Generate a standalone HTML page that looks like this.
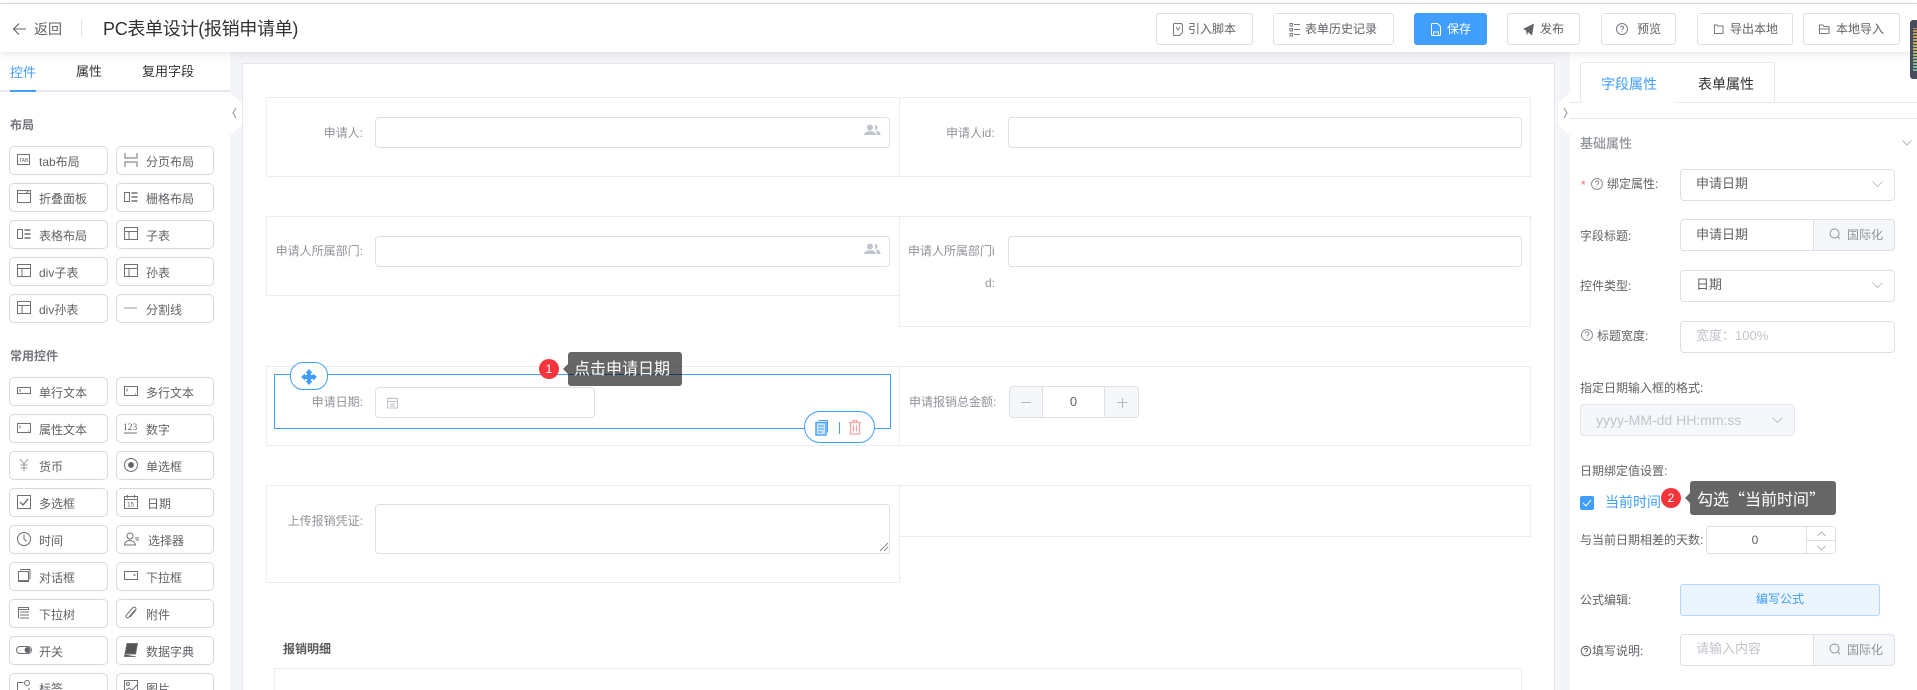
<!DOCTYPE html>
<html lang="zh-CN"><head><meta charset="utf-8"><title>PC表单设计</title>
<style>
*{box-sizing:border-box;margin:0;padding:0}
html,body{width:1917px;height:690px;overflow:hidden;background:#fff}
body{position:relative;font-family:"Liberation Sans","Noto Sans CJK SC",sans-serif;font-size:12px;color:#606266}
.a,.a>*{position:absolute}
.t{position:absolute;white-space:nowrap;line-height:20px}
.hb{position:absolute;top:13px;height:32px;border:1px solid #dcdfe6;border-radius:3px;background:#fff;line-height:30px;font-size:12px;color:#606266;white-space:nowrap}
.hb svg{position:absolute;top:0}
.hb span{position:absolute;top:0}
.b{position:absolute;width:99px;height:29px;border:1px solid #d6d8dc;border-radius:5px;background:#fff;line-height:30px;color:#606266;font-size:12px;white-space:nowrap}
.b svg{position:absolute;left:6px;top:5px;width:16px;height:16px;fill:none;stroke:#6e7076;stroke-width:1}
.b span{position:absolute;left:29px;top:0}
.c2{left:116px;width:98px}.c1{left:9px}
.cell{position:absolute;border:1px solid #ebedf0;background:#fff}
.in{position:absolute;border:1px solid #dcdfe6;border-radius:4px;background:#fff}
.lb{position:absolute;right:1554px;color:#909399;line-height:20px;white-space:nowrap;font-size:12px}
.rl{position:absolute;left:1580px;line-height:20px;white-space:nowrap;font-size:12px;color:#606266}
.val{position:absolute;left:1696px;line-height:20px;font-size:13px;color:#606266;white-space:nowrap}
.add{position:absolute;left:1813px;width:82px;height:32px;background:#f5f7fa;border:1px solid #dcdfe6;border-radius:0 4px 4px 0;color:#909399}
.add span{position:absolute;left:33px;top:0;line-height:30px;font-size:12px;white-space:nowrap}
.add svg{position:absolute;left:15px;top:8px}
.tip{position:absolute;background:rgba(0,0,0,.6);color:#fff;font-size:16px;border-radius:3px;white-space:nowrap;z-index:5}
.tip:before{content:"";position:absolute;left:-5px;top:12px;border:5px solid transparent;border-left:0;border-right-color:rgba(0,0,0,.6)}
.bd{position:absolute;width:20px;height:20px;border-radius:50%;background:#f5333a;color:#fff;text-align:center;line-height:20px;font-size:12px;z-index:6}
.ln{position:absolute;background:#e4e7ed}
.q{font-family:"Noto Sans CJK SC",sans-serif}
</style></head><body>

<!-- top header -->
<div class="ln" style="left:0;top:3px;width:1917px;height:1px;background:#dedede"></div>
<div style="position:absolute;left:0;top:4px;width:1917px;height:48px;background:#fff;box-shadow:0 2px 8px rgba(0,0,0,.10);z-index:2"></div>
<div style="position:absolute;left:0;top:0;width:1917px;height:52px;z-index:3">
<svg style="position:absolute;left:12px;top:22px" width="15" height="14" fill="none" stroke="#606266" stroke-width="1.1"><path d="M14 7H1.5M7 1.5 1.5 7 7 12.5"/></svg>
<div class="t" style="left:34px;top:19px;font-size:14px;color:#606266">返回</div>
<div class="ln" style="left:81px;top:20px;width:1px;height:16px;background:#dcdfe6"></div>
<div class="t" style="left:103px;top:17px;font-size:18px;line-height:24px;color:#303133;letter-spacing:-.3px">PC表单设计(报销申请单)</div>

<div class="hb" style="left:1156px;width:97px"><svg style="left:6px" width="30" height="30" fill="none" stroke="#777a80"><path d="M18.500 9.500h-7a1 1 0 0 0-1 1v10a1 1 0 0 0 1 1h5l3-3v-7.500a1 1 0 0 0-1-1zM13 13l2 3 2-3"/></svg><span style="left:31px">引入脚本</span></div>
<div class="hb" style="left:1273px;width:121px"><svg style="left:4px" width="30" height="30" fill="none" stroke="#777a80"><path d="M16 10.500h6M16 15.500h6M16 20.500h6M12 9.500h2.500v2.500H12zM12 14.500h2.500v2.500H12zM12 19.500h2.500v2.500H12z"/></svg><span style="left:31px">表单历史记录</span></div>
<div class="hb" style="left:1414px;width:73px;background:#409eff;border-color:#409eff;color:#fff"><svg style="left:6px" width="30" height="30" fill="none" stroke="#fff"><path d="M16.500 9.500h-5a1 1 0 0 0-1 1v10a1 1 0 0 0 1 1h7a1 1 0 0 0 1-1v-8zM12.500 21.500v-3.500h5v3.500"/></svg><span style="left:32px">保存</span></div>
<div class="hb" style="left:1507px;width:73px"><svg style="left:5px" width="30" height="30"><path d="M10 15 21 9.500l-2 12-4-3.500-1 3.500-1-5z" fill="#606266"/></svg><span style="left:32px">发布</span></div>
<div class="hb" style="left:1601px;width:75px"><svg style="left:-1px" width="34" height="30" fill="none" stroke="#777a80"><circle cx="21" cy="15" r="5.500"/><path d="M19.500 13.500a1.500 1.500 0 1 1 2 1.500q-.5.300-.5 1.200M21 17.300v.7"/></svg><span style="left:35px">预览</span></div>
<div class="hb" style="left:1697px;width:96px"><svg style="left:4px" width="30" height="30" fill="none" stroke="#777a80"><path d="M12.500 11h2.500l1 1h5v7.500h-8.500z"/></svg><span style="left:32px">导出本地</span></div>
<div class="hb" style="left:1803px;width:97px"><svg style="left:4px" width="30" height="30" fill="none" stroke="#777a80"><path d="M11.500 11h3.500l1 1.500h5v7h-9.500zM11.500 15h10"/></svg><span style="left:32px">本地导入</span></div>
</div>
<div style="position:absolute;left:1910px;top:20px;width:7px;height:59px;background:#474d5c;border-radius:3px 0 0 3px;z-index:4;overflow:hidden"><div style="position:absolute;left:3px;top:8px;width:4px;height:44px;opacity:.8;background:linear-gradient(#d9a05b,#d8cf78 50%,#6fd6b5)"></div><div style="position:absolute;left:3px;top:3px;width:4px;height:52px;background:repeating-linear-gradient(#474d5c 0 1px,transparent 1px 3px)"></div></div>

<!-- gutter -->
<div style="position:absolute;left:230px;top:52px;width:1340px;height:638px;background:#f4f5f9"></div>
<svg style="position:absolute;left:230px;top:91px" width="12" height="46"><path d="M0 2 12 12V34L0 44z" fill="#fff"/><path d="M6 17 3 22l3 5" fill="none" stroke="#909399"/></svg>
<svg style="position:absolute;left:1558px;top:91px" width="12" height="46"><path d="M12 2 0 12V34L12 44z" fill="#fff"/><path d="M6 17l3 5-3 5" fill="none" stroke="#909399"/></svg>

<!-- left panel -->
<div class="t" style="left:10px;top:63px;font-size:13px;color:#409eff">控件</div>
<div class="t" style="left:76px;top:62px;font-size:13px;color:#303133">属性</div>
<div class="t" style="left:142px;top:62px;font-size:13px;color:#303133">复用字段</div>
<div class="ln" style="left:0;top:90px;width:230px;height:2px"></div>
<div class="ln" style="left:10px;top:90px;width:26px;height:2px;background:#409eff"></div>
<div class="t" style="left:10px;top:115px;font-weight:bold;color:#74767b">布局</div>

<div class="b c1" style="top:146px"><svg><rect x="1.500" y="2.500" width="12" height="10"/><text x="3" y="10" font-size="5" stroke="none" fill="#606266">TAB</text></svg><span>tab布局</span></div>
<div class="b c2" style="top:146px"><svg><path d="M2 1v5h12V1M2 15v-5h12v5"/></svg><span>分页布局</span></div>
<div class="b c1" style="top:183px"><svg><rect x="1.500" y="1.500" width="13" height="12"/><path d="M1.500 4.500h13M10 4.500 12.500 1.500"/></svg><span>折叠面板</span></div>
<div class="b c2" style="top:183px"><svg><rect x="1.500" y="3.500" width="5" height="9"/><path d="M8.500 4h6M8.500 8h6M8.500 12h6" stroke-width="1.500"/></svg><span>栅格布局</span></div>
<div class="b c1" style="top:220px"><svg><rect x="1.500" y="3.500" width="5" height="9"/><path d="M8.500 4h6M8.500 8h6M8.500 12h6" stroke-width="1.500"/></svg><span>表格布局</span></div>
<div class="b c2" style="top:220px"><svg><rect x="1.500" y="1.500" width="13" height="12"/><path d="M1.500 5.500h13M6 5.500v8"/></svg><span>子表</span></div>
<div class="b c1" style="top:257px"><svg><rect x="1.500" y="1.500" width="13" height="12"/><path d="M1.500 5.500h13M6 5.500v8"/></svg><span>div子表</span></div>
<div class="b c2" style="top:257px"><svg><rect x="1.500" y="1.500" width="13" height="12"/><path d="M1.500 5.500h13M6 5.500v8"/></svg><span>孙表</span></div>
<div class="b c1" style="top:294px"><svg><rect x="1.500" y="1.500" width="13" height="12"/><path d="M1.500 5.500h13M6 5.500v8"/></svg><span>div孙表</span></div>
<div class="b c2" style="top:294px"><svg><path d="M1 8h13" stroke="#bbb" stroke-width="1.500"/></svg><span>分割线</span></div>

<div class="t" style="left:10px;top:346px;font-weight:bold;color:#74767b">常用控件</div>

<div class="b c1" style="top:377px"><svg><rect x="1.500" y="4.500" width="13" height="6"/><path d="M4 6v3"/></svg><span>单行文本</span></div>
<div class="b c2" style="top:377px"><svg><rect x="1.500" y="3.500" width="13" height="9"/><path d="M4 5.500v3M12 11h1"/></svg><span>多行文本</span></div>
<div class="b c1" style="top:414px"><svg><rect x="1.500" y="3.500" width="13" height="9"/><path d="M4 5.500v3M12 11h1"/></svg><span>属性文本</span></div>
<div class="b c2" style="top:414px"><svg><text x="0" y="10" font-size="9.500" stroke="none" fill="#606266" font-family="Liberation Serif">123</text><path d="M1 13h13"/></svg><span>数字</span></div>
<div class="b c1" style="top:451px"><svg stroke-width=".8"><path d="M4 2l4 5 4-5M8 7v7M4.500 8h7M4.500 11h7" stroke="#999"/></svg><span>货币</span></div>
<div class="b c2" style="top:451px"><svg><circle cx="8" cy="8" r="6.500"/><circle cx="8" cy="8" r="2.500" fill="#606266"/></svg><span>单选框</span></div>
<div class="b c1" style="top:488px"><svg><rect x="1.500" y="1.500" width="13" height="13"/><path d="M4 8l3 3 5-6" stroke-width="1.400"/></svg><span>多选框</span></div>
<div class="b c2" style="top:488px"><svg stroke-width=".8"><rect x="1.500" y="2.500" width="13" height="12"/><path d="M1.500 5.500h13M4.500 1v3M11.500 1v3"/><text x="4" y="12.500" font-size="6.500" stroke="none" fill="#606266">15</text></svg><span style="left:30px">日期</span></div>
<div class="b c1" style="top:525px"><svg><circle cx="8" cy="8" r="6.500"/><path d="M8 3.500V8l2.500 2.500"/></svg><span>时间</span></div>
<div class="b c2" style="top:525px"><svg><circle cx="7" cy="5" r="3"/><path d="M1.500 14c0-6 10-6 11 0zM12 7h4M13 9h3"/></svg><span style="left:31px">选择器</span></div>
<div class="b c1" style="top:562px"><svg><rect x="2.500" y="3.500" width="10" height="10"/><path d="M4 1.500h10v10M2.500 12.500h10" /></svg><span>对话框</span></div>
<div class="b c2" style="top:562px"><svg><rect x="1.500" y="3.500" width="13" height="8"/><path d="M10.500 7h2" stroke-width="1.500"/></svg><span>下拉框</span></div>
<div class="b c1" style="top:599px"><svg stroke="#888"><path d="M2.500 2.500h10v2H2.500zM2.500 4.500v9M4 7h9M4 10h9M4 13h9"/></svg><span>下拉树</span></div>
<div class="b c2" style="top:599px"><svg><path d="M12 5 6 12c-2 2-4-0-2.500-2L9.500 3c2-2 4.500 0 3 2.500L7 12"/></svg><span>附件</span></div>
<div class="b c1" style="top:636px"><svg><rect x="0.500" y="4.500" width="15" height="7" rx="3.500"/><circle cx="11.500" cy="8" r="2.500" fill="#606266"/></svg><span>开关</span></div>
<div class="b c2" style="top:636px"><svg><path d="M4 1.500h10.500l-2 10.500H2zM2 12.500l-.5 2h11" fill="#555"/></svg><span>数据字典</span></div>
<div class="b c1" style="top:673px"><svg><path d="M1.500 3.500h6M1.500 3.500v11M13 9v5.500"/><circle cx="11" cy="4" r="2.500"/></svg><span>标签</span></div>
<div class="b c2" style="top:673px"><svg><rect x="1.500" y="1.500" width="13" height="13"/><circle cx="5" cy="5" r="1.500"/><path d="M2 12l4-3 3 2 5-5"/></svg><span>图片</span></div>

<!-- canvas -->
<div style="position:absolute;left:242px;top:63px;width:1313px;height:627px;background:#fff;border:1px solid #e4e7ed;border-bottom:0"></div>

<div class="cell" style="left:266px;top:97px;width:634px;height:80px"></div>
<div class="cell" style="left:899px;top:97px;width:632px;height:80px"></div>
<div class="lb" style="top:123px">申请人:</div>
<div class="in" style="left:375px;top:117px;width:515px;height:31px"></div>
<svg style="position:absolute;left:864px;top:123px" width="17" height="14" fill="#c0c4cc"><circle cx="6" cy="4.500" r="3"/><path d="M0 12c0-5 12-5 12 0zM11 2a2.500 2.500 0 0 1 0 5M12 7.500c3 0 4.500 2 4.500 4.500H13z"/></svg>
<div class="lb" style="top:123px;right:auto;left:946px">申请人id:</div>
<div class="in" style="left:1008px;top:117px;width:514px;height:31px"></div>

<div class="cell" style="left:266px;top:216px;width:634px;height:80px"></div>
<div class="cell" style="left:899px;top:216px;width:632px;height:111px"></div>
<div class="lb" style="top:241px">申请人所属部门:</div>
<div class="in" style="left:375px;top:236px;width:515px;height:31px"></div>
<svg style="position:absolute;left:864px;top:242px" width="17" height="14" fill="#c0c4cc"><circle cx="6" cy="4.500" r="3"/><path d="M0 12c0-5 12-5 12 0zM11 2a2.500 2.500 0 0 1 0 5M12 7.500c3 0 4.500 2 4.500 4.500H13z"/></svg>
<div class="lb" style="top:241px;right:auto;left:908px">申请人所属部门i</div>
<div class="lb" style="top:273px;right:auto;left:985px">d:</div>
<div class="in" style="left:1008px;top:236px;width:514px;height:31px"></div>

<div class="cell" style="left:266px;top:366px;width:634px;height:80px"></div>
<div class="cell" style="left:899px;top:366px;width:632px;height:80px"></div>
<div style="position:absolute;left:274px;top:374px;width:617px;height:55px;border:1px solid #409eff"></div>
<div class="lb" style="top:392px">申请日期:</div>
<div class="in" style="left:375px;top:387px;width:220px;height:31px"></div>
<svg style="position:absolute;left:386px;top:396px" width="13" height="13" fill="none" stroke="#c0c4cc"><rect x="1.500" y="2.500" width="10" height="9.500"/><path d="M1.500 5.500h10M4 1v2M9 1v2M4 8h5M4 10h5"/></svg>
<div style="position:absolute;left:290px;top:362px;width:38px;height:28px;background:#fff;border:1px solid #409eff;border-radius:13px"></div>
<svg style="position:absolute;left:301px;top:369px" width="16" height="16" fill="#409eff"><path d="M8 0l3.500 4h-7zM8 16l-3.500-4h7zM0 8l4-3.500v7zM16 8l-4 3.500v-7z"/><rect x="6" y="3" width="4" height="10"/><rect x="3" y="6" width="10" height="4"/></svg>
<div style="position:absolute;left:804px;top:411px;width:71px;height:32px;background:#fff;border:1px solid #409eff;border-radius:16px"></div>
<svg style="position:absolute;left:815px;top:419px" width="14" height="17" fill="none" stroke="#409eff"><path d="M3.500 1.500h9v12"/><rect x="1" y="3.500" width="10" height="12.500" fill="#cfe5fd" stroke-width="1.400"/><path d="M3 7h6M3 10h6M3 13h4"/></svg>
<div style="position:absolute;left:839px;top:422px;width:1px;height:12px;background:#409eff"></div>
<svg style="position:absolute;left:848px;top:419px" width="14" height="16" fill="none" stroke="#f4a5a5" stroke-width="1.300"><path d="M1 3.500h12M5 3V1.500h4V3M2.500 3.500v11.500h9V3.500M5.500 6.500v6M8.500 6.500v6"/></svg>

<div class="lb" style="top:392px;right:auto;left:909px">申请报销总金额:</div>
<div class="in" style="left:1009px;top:386px;width:130px;height:32px;overflow:hidden">
<div style="position:absolute;left:0;top:0;width:33px;height:30px;background:#f5f7fa;border-right:1px solid #dcdfe6"></div>
<div style="position:absolute;right:0;top:0;width:34px;height:30px;background:#f5f7fa;border-left:1px solid #dcdfe6"></div>
<div style="position:absolute;left:11px;top:15px;width:10px;height:1px;background:#b4b7bd"></div>
<div style="position:absolute;right:11px;top:15px;width:10px;height:1px;background:#b4b7bd"></div>
<div style="position:absolute;right:15px;top:11px;width:1px;height:10px;background:#b4b7bd"></div>
<div class="t" style="left:0;width:127px;text-align:center;top:5px;font-size:13px;color:#606266">0</div>
</div>

<div class="cell" style="left:266px;top:485px;width:634px;height:98px"></div>
<div class="cell" style="left:899px;top:485px;width:632px;height:52px"></div>
<div class="lb" style="top:511px">上传报销凭证:</div>
<div class="in" style="left:375px;top:504px;width:515px;height:50px"></div>
<svg style="position:absolute;left:879px;top:542px" width="10" height="10" stroke="#666" stroke-width=".8"><path d="M1 9 9 1M5 9l4-4"/></svg>

<div class="t" style="left:283px;top:639px;font-weight:bold;color:#5a5a5a">报销明细</div>
<div style="position:absolute;left:274px;top:668px;width:1248px;height:30px;border:1px solid #ebedf0"></div>

<!-- tooltip 1 -->
<div class="bd" style="left:539px;top:359px">1</div>
<div class="tip" style="left:568px;top:352px;width:114px;height:34px;line-height:36px;padding-left:6px">点击申请日期</div>

<!-- right panel -->
<div class="ln" style="left:1570px;top:102px;width:347px;height:1px"></div>
<div style="position:absolute;left:1580px;top:62px;width:98px;height:41px;border:1px solid #e4e7ed;border-bottom:1px solid #fff;border-radius:3px 0 0 0;background:#fff"></div>
<div style="position:absolute;left:1677px;top:62px;width:98px;height:41px;border:1px solid #e4e7ed;border-left:0;border-radius:0 3px 0 0;background:#fff"></div>
<div class="t" style="left:1601px;top:74px;font-size:14px;color:#409eff">字段属性</div>
<div class="t" style="left:1698px;top:74px;font-size:14px;color:#303133">表单属性</div>
<div class="ln" style="left:1570px;top:118px;width:347px;height:1px"></div>

<div class="t" style="left:1580px;top:134px;font-size:13px;color:#909399;font-weight:500">基础属性</div>
<svg style="position:absolute;left:1902px;top:140px" width="10" height="6" fill="none" stroke="#b4b7bd"><path d="M.5.500 5 5l4.500-4.500"/></svg>

<div class="t" style="left:1581px;top:175px;color:#f56c6c;font-size:12px">*</div>
<svg style="position:absolute;left:1590px;top:177px" width="14" height="14" fill="none" stroke="#909399"><circle cx="7" cy="7" r="5.500"/><path d="M5.300 5.500a1.700 1.700 0 1 1 2.300 1.600q-.6.300-.6 1.300M7 9.700v.8"/></svg>
<div class="rl" style="left:1607px;top:174px">绑定属性:</div>
<div class="in" style="left:1680px;top:169px;width:215px;height:32px"></div>
<div class="val" style="top:174px">申请日期</div>
<svg style="position:absolute;left:1872px;top:181px" width="11" height="7" fill="none" stroke="#c0c4cc"><path d="M.5.500 5.500 5.500l5-5"/></svg>

<div class="rl" style="top:226px">字段标题:</div>
<div class="in" style="left:1680px;top:219px;width:134px;height:32px;border-radius:4px 0 0 4px"></div>
<div class="val" style="top:225px">申请日期</div>
<div class="add" style="top:219px"><svg width="12" height="12" fill="none" stroke="#909399"><circle cx="5.500" cy="5.500" r="4.500"/><path d="M9 9l2 2"/></svg><span>国际化</span></div>

<div class="rl" style="top:276px">控件类型:</div>
<div class="in" style="left:1680px;top:270px;width:215px;height:32px"></div>
<div class="val" style="top:275px">日期</div>
<svg style="position:absolute;left:1872px;top:282px" width="11" height="7" fill="none" stroke="#c0c4cc"><path d="M.5.500 5.500 5.500l5-5"/></svg>

<svg style="position:absolute;left:1580px;top:328px" width="14" height="14" fill="none" stroke="#909399"><circle cx="7" cy="7" r="5.500"/><path d="M5.300 5.500a1.700 1.700 0 1 1 2.300 1.600q-.6.300-.6 1.300M7 9.700v.8"/></svg>
<div class="rl" style="left:1597px;top:326px">标题宽度:</div>
<div class="in" style="left:1680px;top:321px;width:215px;height:32px"></div>
<div class="val" style="top:326px;color:#c0c4cc;font-size:13px">宽度：100%</div>

<div class="rl" style="top:378px">指定日期输入框的格式:</div>
<div class="in" style="left:1580px;top:404px;width:215px;height:32px;background:#f5f7fa;border-color:#e4e7ed"></div>
<div class="t" style="left:1596px;top:410px;font-size:14px;color:#c0c4cc">yyyy-MM-dd HH:mm:ss</div>
<svg style="position:absolute;left:1772px;top:417px" width="11" height="7" fill="none" stroke="#c0c4cc"><path d="M.5.500 5.500 5.500l5-5"/></svg>

<div class="rl" style="top:461px">日期绑定值设置:</div>
<div style="position:absolute;left:1580px;top:496px;width:14px;height:14px;background:#409eff;border-radius:2px"></div>
<svg style="position:absolute;left:1582px;top:499px" width="10" height="8" fill="none" stroke="#fff"><path d="M1 4l3 3 5-6"/></svg>
<div class="t" style="left:1605px;top:492px;font-size:14px;color:#409eff">当前时间</div>
<div class="bd" style="left:1661px;top:488px">2</div>
<div class="tip" style="left:1690px;top:481px;width:146px;height:34px;line-height:34px;padding-left:7px">勾选<span class="q">“</span>当前时间<span class="q">”</span></div>

<div class="rl" style="top:530px">与当前日期相差的天数:</div>
<div class="in" style="left:1706px;top:526px;width:130px;height:28px;overflow:hidden">
<div style="position:absolute;left:99px;top:0;width:30px;height:26px;background:#fff;border-left:1px solid #dcdfe6"></div>
<div style="position:absolute;left:100px;top:13px;width:29px;height:1px;background:#dcdfe6"></div>
<svg style="position:absolute;left:110px;top:4px" width="9" height="20" fill="none" stroke="#b4b7bd"><path d="M.5 5 4.500 1l4 4M.5 15l4 4 4-4"/></svg>
<div class="t" style="left:0;width:96px;text-align:center;top:3px;font-size:12px;color:#606266">0</div>
</div>

<div class="rl" style="top:590px">公式编辑:</div>
<div style="position:absolute;left:1680px;top:584px;width:200px;height:32px;background:#ecf5ff;border:1px solid #b3d8ff;border-radius:3px;color:#409eff;text-align:center;line-height:29px;font-size:12px">编写公式</div>

<svg style="position:absolute;left:1580px;top:645px" width="12" height="12" fill="none" stroke="#606266"><circle cx="6" cy="6" r="4.800"/><path d="M4.500 4.800a1.500 1.500 0 1 1 2 1.400q-.5.300-.5 1.100M6 8.300v.7"/></svg>
<div class="rl" style="left:1592px;top:641px">填写说明:</div>
<div class="in" style="left:1680px;top:634px;width:134px;height:32px;border-radius:4px 0 0 4px"></div>
<div class="val" style="top:639px;color:#c0c4cc">请输入内容</div>
<div class="add" style="top:634px"><svg width="12" height="12" fill="none" stroke="#909399"><circle cx="5.500" cy="5.500" r="4.500"/><path d="M9 9l2 2"/></svg><span>国际化</span></div>

</body></html>
